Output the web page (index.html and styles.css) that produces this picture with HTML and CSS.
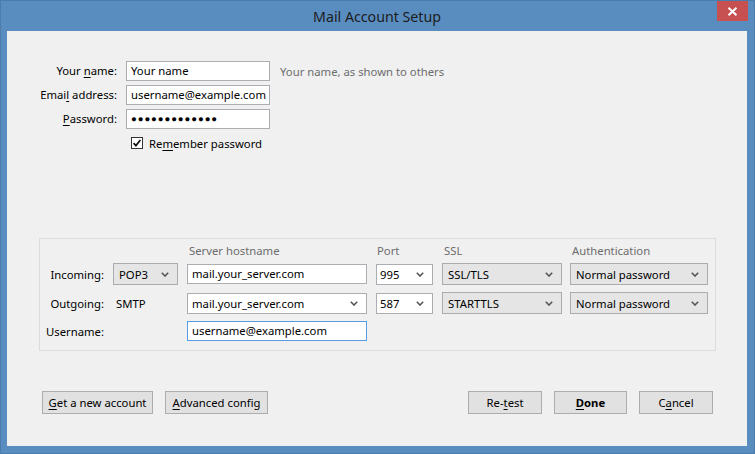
FILE: index.html
```html
<!DOCTYPE html>
<html>
<head>
<meta charset="utf-8">
<link rel="stylesheet" href="styles.css">
</head>
<body>
<div class="window">
  <div class="titlebar">
    <div></div>
    <div class="title">Mail Account Setup</div>
    <div class="close">
      <svg width="11" height="9" viewBox="0 0 11 9"><path d="M1.5 0.8 L9.5 8.2 M9.5 0.8 L1.5 8.2" stroke="#fff" stroke-width="2" fill="none"/></svg>
    </div>
  </div>
  <div class="client">
    <div class="form">
      <div class="lbl">Your <u>n</u>ame:</div>
      <div class="field">Your name</div>
      <div class="hint">Your name, as shown to others</div>
      <div class="lbl">Emai<u>l</u> address:</div>
      <div class="field">username@example.com</div>
      <div></div>
      <div class="lbl"><u>P</u>assword:</div>
      <div class="field dots">●●●●●●●●●●●●●</div>
      <div></div>
      <div></div>
      <div class="check">
        <svg class="cb" width="12" height="12" viewBox="0 0 12 12"><rect x="0.5" y="0.5" width="11" height="11" fill="#fff" stroke="#333"/><path d="M2.6 6.2 L4.9 8.6 L9.4 3" stroke="#111" stroke-width="1.7" fill="none"/></svg>
        <span>Re<u>m</u>ember password</span>
      </div>
      <div></div>
    </div>

    <div class="server">
      <div class="srow hdr">
        <div class="c-lbl"></div>
        <div class="c-proto"></div>
        <div class="c-host">Server hostname</div>
        <div class="c-port">Port</div>
        <div class="c-ssl">SSL</div>
        <div class="c-auth">Authentication</div>
      </div>
      <div class="srow">
        <div class="c-lbl rlbl">Incoming:</div>
        <div class="c-proto sel gray"><span>POP3</span><svg width="8" height="5" viewBox="0 0 8 5"><path d="M0.8 0.8 L4 4 L7.2 0.8" stroke="#555" stroke-width="1.6" fill="none"/></svg></div>
        <div class="c-host field">mail.your_server.com</div>
        <div class="c-port sel white"><span>995</span><svg width="8" height="5" viewBox="0 0 8 5"><path d="M0.8 0.8 L4 4 L7.2 0.8" stroke="#555" stroke-width="1.6" fill="none"/></svg></div>
        <div class="c-ssl sel gray"><span>SSL/TLS</span><svg width="8" height="5" viewBox="0 0 8 5"><path d="M0.8 0.8 L4 4 L7.2 0.8" stroke="#555" stroke-width="1.6" fill="none"/></svg></div>
        <div class="c-auth sel gray"><span>Normal password</span><svg width="8" height="5" viewBox="0 0 8 5"><path d="M0.8 0.8 L4 4 L7.2 0.8" stroke="#555" stroke-width="1.6" fill="none"/></svg></div>
      </div>
      <div class="srow gap">
        <div class="c-lbl rlbl">Outgoing:</div>
        <div class="c-proto smtp">SMTP</div>
        <div class="c-host sel white"><span>mail.your_server.com</span><svg width="8" height="5" viewBox="0 0 8 5"><path d="M0.8 0.8 L4 4 L7.2 0.8" stroke="#555" stroke-width="1.6" fill="none"/></svg></div>
        <div class="c-port sel white"><span>587</span><svg width="8" height="5" viewBox="0 0 8 5"><path d="M0.8 0.8 L4 4 L7.2 0.8" stroke="#555" stroke-width="1.6" fill="none"/></svg></div>
        <div class="c-ssl sel gray"><span>STARTTLS</span><svg width="8" height="5" viewBox="0 0 8 5"><path d="M0.8 0.8 L4 4 L7.2 0.8" stroke="#555" stroke-width="1.6" fill="none"/></svg></div>
        <div class="c-auth sel gray"><span>Normal password</span><svg width="8" height="5" viewBox="0 0 8 5"><path d="M0.8 0.8 L4 4 L7.2 0.8" stroke="#555" stroke-width="1.6" fill="none"/></svg></div>
      </div>
      <div class="srow gap urow">
        <div class="c-lbl rlbl">Username:</div>
        <div class="c-proto"></div>
        <div class="c-host field focus">username@example.com</div>
      </div>
    </div>

    <div class="footer">
      <div class="btns">
        <div class="btn b-new"><u>G</u>et a new account</div>
        <div class="btn b-adv"><u>A</u>dvanced config</div>
      </div>
      <div class="btns">
        <div class="btn b-std">Re-<u>t</u>est</div>
        <div class="btn b-done bold"><u>D</u>one</div>
        <div class="btn b-std">C<u>a</u>ncel</div>
      </div>
    </div>
  </div>
</div>
</body>
</html>
```

FILE: styles.css
```css
* { box-sizing: border-box; }
html, body { margin: 0; padding: 0; }
body {
  font-family: "Noto Sans", "Open Sans", sans-serif;
  font-size: 11.3px;
  color: #000;
  width: 755px;
  height: 454px;
  overflow: hidden;
}
u { text-decoration: underline; text-underline-offset: 2px; text-decoration-thickness: 1px; }

.window {
  width: 755px;
  height: 454px;
  background: #5a8dbf;
  border: 1px solid #4a7cae;
  padding: 0 7px 7px 6px;
  display: flex;
  flex-direction: column;
}
.titlebar {
  height: 30px;
  display: grid;
  grid-template-columns: 1fr auto 1fr;
  align-items: start;
}
.title {
  font-size: 14.2px;
  color: #1c1c1c;
  line-height: 30px;
  padding-top: 1px;
}
.close {
  justify-self: end;
  width: 31px;
  height: 20px;
  margin-right: -1px;
  background: #c75050;
  display: flex;
  align-items: center;
  justify-content: center;
}
.client {
  flex: 1;
  background: #f0f0f0;
  display: flex;
  flex-direction: column;
  padding-top: 30px;
}

.form {
  display: grid;
  grid-template-columns: 110px 144px auto;
  grid-auto-rows: 20px;
  column-gap: 9px;
  row-gap: 4px;
  align-items: center;
}
.lbl { text-align: right; line-height: 20px; white-space: nowrap; }
.hint { color: #6d6d6d; margin-left: 1px; white-space: nowrap; }
.field {
  height: 20px;
  background: #fff;
  border: 1px solid #abadb3;
  padding: 0 4px;
  line-height: 18px;
  white-space: nowrap;
  overflow: hidden;
}
.dots { font-size: 9.6px; letter-spacing: 0.9px; line-height: 18px; }
.check {
  display: flex;
  align-items: center;
  padding-left: 5px;
  gap: 6px;
  margin-top: 0;
}
.cb { display: block; }

.server {
  margin: 85px 31px 0 32px;
  border: 1px solid #dcdcdc;
  padding: 4px 0 9px 0;
}
.srow {
  display: flex;
  align-items: center;
  column-gap: 9px;
  height: 22px;
}
.srow.hdr { height: 20px; align-items: flex-start; line-height: 16px; color: #6d6d6d; }
.srow.gap { margin-top: 7px; }
.srow.urow { height: 20px; }
.hdr .c-host { padding-left: 2px; }
.hdr .c-port { padding-left: 1px; }
.hdr .c-ssl { padding-left: 2px; }
.hdr .c-auth { padding-left: 2px; }

.c-lbl { width: 64px; flex: none; }
.rlbl { text-align: right; white-space: nowrap; }
.c-proto { width: 65px; flex: none; }
.c-host { width: 180px; flex: none; }
.c-port { width: 57px; flex: none; }
.c-ssl { width: 120px; flex: none; }
.c-auth { width: 138px; flex: none; margin-left: -1px; }
.smtp { padding-left: 3px; }

.sel {
  height: 22px;
  display: flex;
  align-items: center;
  justify-content: space-between;
  padding: 0 8px 0 4px;
  white-space: nowrap;
}
.sel svg { display: block; flex: none; }
.sel.gray { background: #e5e5e5; border: 1px solid #acacac; padding-left: 5px; }
.sel.white { background: #fff; border: 1px solid #abadb3; height: 21px; padding-left: 3px; }
.c-host.sel.white { padding-left: 4px; }
.field.focus { border-color: #569de5; }

.footer {
  margin-top: 40px;
  padding: 0 34px 0 35px;
  display: flex;
  justify-content: space-between;
}
.btns { display: flex; gap: 12px; }
.btn {
  height: 23px;
  background: #e1e1e1;
  border: 1px solid #adadad;
  display: flex;
  align-items: center;
  justify-content: center;
  white-space: nowrap;
}
.b-new { width: 111px; }
.b-adv { width: 103px; }
.b-std { width: 74px; }
.b-done { width: 73px; }
.bold { font-weight: bold; }
```
